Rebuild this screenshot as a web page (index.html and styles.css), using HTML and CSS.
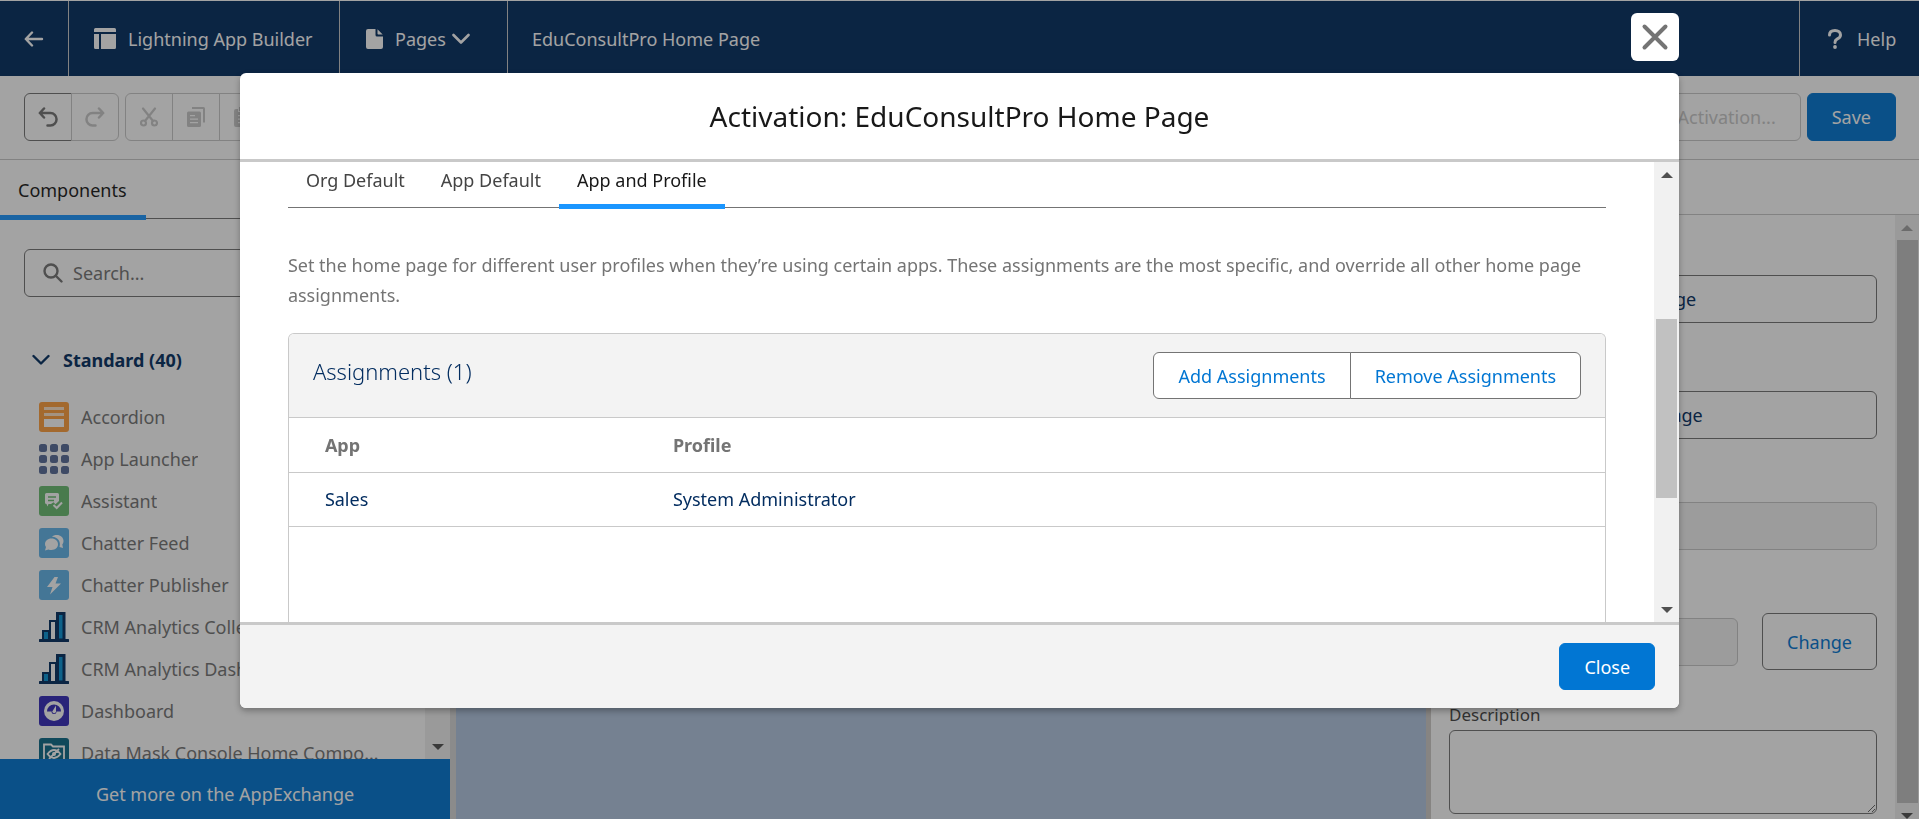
FILE: index.html
```html
<!DOCTYPE html>
<html lang="en">
<head>
<meta charset="utf-8">
<title>EduConsultPro Home Page - Lightning App Builder</title>
<link rel="stylesheet" href="styles.css">
</head>
<body>
<div class="app">
  <header class="topbar">
    <a class="topbar-cell topbar-back" href="#" aria-label="Back">
      <svg width="20" height="16" viewBox="0 0 20 16" fill="none" stroke="currentColor" stroke-width="2.4" stroke-linecap="round" stroke-linejoin="round"><path d="M18 8H2M8 1.5 1.8 8 8 14.5"/></svg>
    </a>
    <a class="topbar-cell topbar-builder" href="#">
      <svg width="22" height="21" viewBox="0 0 22 21" fill="currentColor"><path d="M1.5 0h19Q22 0 22 1.500V4H0V1.500Q0 0 1.500 0ZM0 6h5v15H1.500Q0 21 0 19.500ZM7 6h15v13.500q0 1.500-1.500 1.500H7Z"/></svg>
      <span>Lightning App Builder</span>
    </a>
    <button class="topbar-cell topbar-pages" type="button">
      <svg width="17" height="20" viewBox="0 0 17 20" fill="currentColor"><path d="M2 0h7.500v6Q9.500 7.500 11 7.500h6V18q0 2-2 2H2q-2 0-2-2V2Q0 0 2 0ZM11.500.3 16.700 5.500H12.200q-.7 0-.7-.7Z"/></svg>
      <span>Pages</span>
      <svg class="chevron" width="18" height="12" viewBox="0 0 18 12" fill="none" stroke="currentColor" stroke-width="2.600" stroke-linecap="round" stroke-linejoin="round"><path d="M1.500 2 9 9.500 16.500 2"/></svg>
    </button>
    <span class="topbar-title">EduConsultPro Home Page</span>
    <a class="topbar-help" href="#">
      <svg width="14" height="20" viewBox="0 0 14 20"><path d="M1.500 6C1.500 3 3.700 1.500 7 1.500S12.500 3.300 12.500 6 10.800 9.200 8.700 10.300Q7 11.200 7 13.500" fill="none" stroke="currentColor" stroke-width="3" stroke-linecap="round"/><circle cx="7" cy="18" r="1.900" fill="currentColor"/></svg>
      <span>Help</span>
    </a>
  </header>

  <div class="toolbar">
    <div class="icon-group">
      <button type="button" class="icon-button is-enabled" aria-label="Undo">
        <svg width="20" height="20" viewBox="0 0 20 20" fill="none" stroke="currentColor" stroke-width="2.500" stroke-linecap="round" stroke-linejoin="round"><path d="M6 1.500 1.800 6 6 10.500M2 6h10.500a6 6.200 0 0 1 0 12.500H9.500"/></svg>
      </button>
      <button type="button" class="icon-button" aria-label="Redo" disabled>
        <svg width="20" height="20" viewBox="0 0 20 20" fill="none" stroke="currentColor" stroke-width="2.500" stroke-linecap="round" stroke-linejoin="round"><path d="M14 1.500 18.200 6 14 10.500M18 6H7.500a6 6.200 0 0 0 0 12.500H10.500"/></svg>
      </button>
    </div>
    <div class="icon-group">
      <button type="button" class="icon-button" aria-label="Cut" disabled>
        <svg width="18" height="20" viewBox="0 0 18 20" fill="none" stroke="currentColor" stroke-width="2.200" stroke-linecap="round"><path d="M3 1.500 13 14M15 1.500 5 14"/><circle cx="3.500" cy="16" r="2.500"/><circle cx="14.500" cy="16" r="2.500"/></svg>
      </button>
      <button type="button" class="icon-button" aria-label="Copy" disabled>
        <svg width="18" height="20" viewBox="0 0 18 20" fill="currentColor"><path d="M5 0h11.500Q18 0 18 1.500V15.500H16V2H5Z"/><path fill-rule="evenodd" d="M1.500 4.500h11Q14 4.500 14 6v12.500q0 1.500-1.500 1.500h-11Q0 20 0 18.500V6Q0 4.500 1.500 4.500ZM3 8v1.300h5V8ZM3 11.500v1.300h8v-1.300ZM3 15v1.300h8V15Z"/></svg>
      </button>
      <button type="button" class="icon-button" aria-label="Paste" disabled>
        <svg width="18" height="20" viewBox="0 0 18 20" fill="currentColor"><path d="M5 0h8v4H5Z"/><path fill-rule="evenodd" d="M2 2h2v3h10V2h2q2 0 2 2v14q0 2-2 2H2q-2 0-2-2V4q0-2 2-2ZM4 8v1.300h10V8ZM4 11.500v1.300h10v-1.300ZM4 15v1.300h10V15Z"/></svg>
      </button>
    </div>
    <div class="toolbar-actions">
      <button type="button" class="button button-outline" disabled>Activation...</button>
      <button type="button" class="button button-brand">Save</button>
    </div>
  </div>

  <div class="workspace">
    <aside class="components">
      <div class="panel-tabs"><button type="button" class="panel-tab">Components</button></div>
      <div class="components-scroll">
        <div class="components-list">
          <label class="search">
            <svg width="20" height="20" viewBox="0 0 20 20" fill="none" stroke="currentColor" stroke-width="2.400" stroke-linecap="round"><circle cx="8" cy="8" r="6.500"/><path d="m13 13 5.500 5.500"/></svg>
            <input type="text" placeholder="Search..." aria-label="Search components">
          </label>
          <button type="button" class="section-toggle">
            <svg width="18" height="12" viewBox="0 0 18 12" fill="none" stroke="currentColor" stroke-width="2.400" stroke-linecap="round" stroke-linejoin="round"><path d="M1.500 2 9 9.500 16.500 2"/></svg>
            <span>Standard (40)</span>
          </button>
          <ul class="items">
            <li><svg class="tile" viewBox="0 0 30 30"><rect width="30" height="30" rx="3" fill="#ff9e3d"/><path d="M5 5h20v3H5ZM5 11h20v3H5Z" fill="#fff" opacity=".72"/><path d="M5 17h20v8H5Z" fill="#fff"/></svg><span>Accordion</span></li>
            <li><svg class="tile" viewBox="0 0 30 30" fill="#576b98"><rect width="8" height="8" rx="2.500"/><rect x="11" width="8" height="8" rx="2.500"/><rect x="22" width="8" height="8" rx="2.500"/><rect y="11" width="8" height="8" rx="2.500"/><rect x="11" y="11" width="8" height="8" rx="2.500"/><rect x="22" y="11" width="8" height="8" rx="2.500"/><rect y="22" width="8" height="8" rx="2.500"/><rect x="11" y="22" width="8" height="8" rx="2.500"/><rect x="22" y="22" width="8" height="8" rx="2.500"/></svg><span>App Launcher</span></li>
            <li><svg class="tile" viewBox="0 0 30 30"><rect width="30" height="30" rx="3" fill="#69bd70"/><path d="M7.500 7h11Q20 7 20 8.500V15l-3.500 3.200-2-2L12 18H9.500L8.500 20.500 7.500 18Q6 18 6 16.500v-8Q6 7 7.500 7Z" fill="#fff"/><path d="M9 11h8M9 14.500h6" stroke="#69bd70" stroke-width="1.300"/><path d="m14.500 19 3.200 3L23 16.500" fill="none" stroke="#fff" stroke-width="2"/></svg><span>Assistant</span></li>
            <li><svg class="tile" viewBox="0 0 30 30"><rect width="30" height="30" rx="3" fill="#62b4ea"/><path d="M12.500 10.500c4 0 6.500 2.500 6.500 5.800s-2.500 5.700-6.500 5.700q-1.700 0-3-.6L6 22.500l1-3.500q-1-1.200-1-2.800c0-3.200 2.500-5.700 6.500-5.700Z" fill="#fff"/><path d="M13 8.700c1-1 2.700-1.700 4.700-1.700 4 0 6.800 2.600 6.800 6 0 1.400-.5 2.500-1.200 3.500l.7 3.500-3.500-1c1.600-5.500-1.500-10-7.500-10.300Z" fill="#fff"/></svg><span>Chatter Feed</span></li>
            <li><svg class="tile" viewBox="0 0 30 30"><rect width="30" height="30" rx="3" fill="#62b4ea"/><path d="M15.500 7 8 17h5.500L11 24.500 22 13.500h-5.500L19 7Z" fill="#fff"/></svg><span>Chatter Publisher</span></li>
            <li><svg class="tile" viewBox="0 0 30 30"><path d="M1 28.500h28" stroke="#032d60" stroke-width="3" stroke-linecap="round"/><path d="M4 19h6v9H4Z" fill="#0793d5" stroke="#032d60" stroke-width="2"/><path d="M11 9h6v19h-6Z" fill="#fff" stroke="#032d60" stroke-width="2"/><path d="M18.500 1.500h6.500V28h-6.500Z" fill="#0793d5" stroke="#032d60" stroke-width="3"/></svg><span>CRM Analytics Collection</span></li>
            <li><svg class="tile" viewBox="0 0 30 30"><path d="M1 28.500h28" stroke="#032d60" stroke-width="3" stroke-linecap="round"/><path d="M4 19h6v9H4Z" fill="#0793d5" stroke="#032d60" stroke-width="2"/><path d="M11 9h6v19h-6Z" fill="#fff" stroke="#032d60" stroke-width="2"/><path d="M18.500 1.500h6.500V28h-6.500Z" fill="#0793d5" stroke="#032d60" stroke-width="3"/></svg><span>CRM Analytics Dashboard</span></li>
            <li><svg class="tile" viewBox="0 0 30 30"><rect width="30" height="30" rx="3" fill="#352bb9"/><circle cx="15" cy="15" r="10" fill="#fff"/><path d="M8 15.500a7 7 0 1 1 14 0h-4.500a2.500 2.500 0 0 1-5 0Z" fill="#352bb9"/><path d="M13.300 15.500 17 9.500v6.200a1.900 1.900 0 0 1-3.700 0Z" fill="#fff"/></svg><span>Dashboard</span></li>
            <li><svg class="tile" viewBox="0 0 30 30"><rect width="30" height="30" rx="3" fill="#0b6a87"/><path d="M5 24V6.500h7l2 2h11V24Z" fill="none" stroke="#fff" stroke-width="1.800"/><path d="M8.500 16q6.500-8 13 0-6.500 8-13 0ZM10 21 20 11" fill="none" stroke="#fff" stroke-width="1.800"/><circle cx="15" cy="16" r="2" fill="#fff"/></svg><span>Data Mask Console Home Component</span></li>
          </ul>
        </div>
        <div class="scrollbar" aria-hidden="true">
          <span class="arrow arrow-up"></span>
          <span class="thumb thumb-list"></span>
          <span class="arrow arrow-down"></span>
        </div>
      </div>
      <a class="appexchange" href="#">Get more on the AppExchange</a>
    </aside>
    <main class="canvas"></main>
    <aside class="properties">
      <div class="properties-head"></div>
      <div class="properties-scroll">
        <form class="fields">
          <input class="field" type="text" value="EduConsultPro Home Page" aria-label="Label">
          <input class="field" type="text" value="EduConsultPro_Home_Page" aria-label="Developer Name">
          <input class="field" type="text" aria-label="Page Type" disabled>
          <div class="field-row">
            <input class="field" type="text" aria-label="Template" disabled>
            <button type="button" class="button button-change">Change</button>
          </div>
          <div class="field-stack">
            <label for="description">Description</label>
            <textarea id="description"></textarea>
          </div>
        </form>
        <div class="scrollbar" aria-hidden="true">
          <span class="arrow arrow-up is-dim"></span>
          <span class="thumb thumb-properties"></span>
          <span class="arrow arrow-down"></span>
        </div>
      </div>
    </aside>
  </div>
</div>

<div class="backdrop">
  <section class="modal" role="dialog" aria-modal="true" aria-labelledby="modal-title">
    <button type="button" class="modal-x" aria-label="Close dialog">
      <svg width="28" height="28" viewBox="0 0 28 28" fill="none" stroke="currentColor" stroke-width="4" stroke-linecap="round"><path d="m3.500 3.500 21 21M24.500 3.500l-21 21"/></svg>
    </button>
    <header class="modal-header"><h1 id="modal-title">Activation: EduConsultPro Home Page</h1></header>
    <div class="modal-body">
      <div class="modal-content">
        <div class="tabs" role="tablist">
          <button type="button" class="tab" role="tab" aria-selected="false">Org Default</button>
          <button type="button" class="tab" role="tab" aria-selected="false">App Default</button>
          <button type="button" class="tab is-active" role="tab" aria-selected="true">App and Profile</button>
        </div>
        <p class="intro">Set the home page for different user profiles when they’re using certain apps. These assignments are the most specific, and override all other home page assignments.</p>
        <div class="card">
          <div class="card-header">
            <h2>Assignments (1)</h2>
            <div class="button-group">
              <button type="button" class="button">Add Assignments</button>
              <button type="button" class="button">Remove Assignments</button>
            </div>
          </div>
          <table class="assignments">
            <thead><tr><th scope="col">App</th><th scope="col">Profile</th></tr></thead>
            <tbody><tr><td>Sales</td><td>System Administrator</td></tr></tbody>
          </table>
        </div>
      </div>
      <div class="scrollbar" aria-hidden="true">
        <span class="arrow arrow-up"></span>
        <span class="gap-above"></span>
        <span class="thumb thumb-modal"></span>
        <span class="gap-below"></span>
        <span class="arrow arrow-down"></span>
      </div>
    </div>
    <footer class="modal-footer"><button type="button" class="button button-brand">Close</button></footer>
  </section>
</div>
</body>
</html>
```

FILE: styles.css
```css
* { box-sizing: border-box; }

body {
  margin: 0;
  font-family: "Segoe UI", "Noto Sans", "Open Sans", sans-serif;
  font-size: 18px;
  line-height: 30px;
  color: #181818;
  overflow: hidden;
}

button, input, textarea { font: inherit; color: inherit; }
button { cursor: pointer; }
a { color: inherit; text-decoration: none; }
svg { flex: none; display: block; }

.app {
  height: 100vh;
  display: flex;
  flex-direction: column;
  background: #fff;
  border-top: 1px solid #fff;
}

/* Top navigation */
.topbar {
  flex: none;
  display: flex;
  height: 75px;
  background: #032d60;
  color: #fff;
}
.topbar-cell {
  display: flex;
  align-items: center;
  border: 0;
  border-right: 1px solid #c9c9c9;
  background: none;
  color: inherit;
}
.topbar-back { padding: 0 24px; width: 69px; }
.topbar-builder { gap: 12px; width: 271px; padding-left: 25px; }
.topbar-pages { gap: 12px; width: 168px; padding: 0 0 0 26px; }
.topbar-pages .chevron { margin-left: -6px; }
.topbar-title { flex: 1; padding-left: 24px; align-self: center; }
.topbar-help {
  display: flex;
  align-items: center;
  gap: 15px;
  width: 120px;
  padding-left: 28px;
  border-left: 1px solid #c9c9c9;
}

/* Toolbar */
.toolbar {
  flex: none;
  display: flex;
  gap: 6px;
  height: 84px;
  padding: 17px 23px 0 24px;
  border-bottom: 1px solid #c9c9c9;
}
.icon-group { display: flex; }
.icon-button {
  display: grid;
  place-items: center;
  width: 48px;
  height: 48px;
  padding: 0;
  border: 1px solid #c9c9c9;
  background: #fff;
  color: #c9c9c9;
}
.icon-button + .icon-button { margin-left: -1px; }
.icon-button:first-child { border-radius: 6px 0 0 6px; }
.icon-button:last-child { border-radius: 0 6px 6px 0; }
.icon-button.is-enabled { border-color: #747474; color: #747474; }
.toolbar-actions { display: flex; gap: 6px; margin-left: auto; }

.button {
  height: 48px;
  padding: 0 24px;
  border: 1px solid #747474;
  border-radius: 6px;
  background: #fff;
  color: #0176d3;
  white-space: nowrap;
}
.button-outline { border-color: #c9c9c9; color: #c9c9c9; }
.button-brand { border-color: #0176d3; background: #0176d3; color: #fff; }

/* Workspace columns */
.workspace { flex: 1; min-height: 0; display: flex; }

.components {
  flex: none;
  display: flex;
  flex-direction: column;
  width: 450px;
}
.panel-tabs {
  flex: none;
  display: flex;
  height: 59px;
  border-bottom: 1px solid #747474;
}
.panel-tab {
  width: 146px;
  height: 60px;
  padding: 4px 0 0 18px;
  border: 0;
  border-bottom: 5px solid #1b96ff;
  background: none;
  text-align: left;
}
.components-scroll { flex: 1; min-height: 0; display: flex; }
.components-list {
  flex: 1;
  min-width: 0;
  overflow: hidden;
  padding: 30px 24px 0;
}
.search {
  display: flex;
  align-items: center;
  gap: 10px;
  height: 48px;
  padding: 0 18px;
  border: 1px solid #747474;
  border-radius: 6px;
  color: #747474;
}
.search input { flex: 1; min-width: 0; padding: 0; border: 0; background: none; outline: 0; }
.search input::placeholder { color: #747474; opacity: 1; }
.section-toggle {
  display: flex;
  align-items: center;
  gap: 13px;
  margin: 48px 0 27px;
  padding: 0 0 0 8px;
  border: 0;
  background: none;
  color: #032d60;
  font-weight: 700;
}
.items {
  display: flex;
  flex-direction: column;
  gap: 12px;
  margin: 0;
  padding: 0 12px 0 15px;
  list-style: none;
  color: #747474;
}
.items li { display: flex; align-items: center; gap: 12px; height: 30px; }
.items span { min-width: 0; overflow: hidden; text-overflow: ellipsis; white-space: nowrap; }
.tile { width: 30px; height: 30px; }
.appexchange {
  flex: none;
  display: grid;
  place-items: center;
  height: 60px;
  padding-top: 10px;
  background: #0176d3;
  color: #fff;
}

.canvas {
  flex: 1;
  background: #b2c6e1;
  border-left: 6px solid #d8d8d8;
  border-right: 5px solid #cfcbc8;
}

.properties {
  flex: none;
  display: flex;
  flex-direction: column;
  width: 488px;
}
.properties-head { flex: none; height: 55px; border-bottom: 1px solid #c9c9c9; }
.properties-scroll { flex: 1; min-height: 0; display: flex; }
.fields {
  flex: 1;
  min-width: 0;
  overflow: hidden;
  display: flex;
  flex-direction: column;
  padding: 60px 18px 0;
}
.field {
  flex: none;
  width: 100%;
  height: 48px;
  padding: 0 18px;
  border: 1px solid #747474;
  border-radius: 6px;
  background: #fff;
  color: #032d60;
}
.field + .field { margin-top: 68px; }
.field:disabled { margin-top: 63px; border-color: #c9c9c9; background: #f3f3f3; }
.field-row { display: flex; align-items: center; gap: 24px; margin-top: 63px; }
.field-row .field { flex: 1; min-width: 0; margin-top: 0; }
.button-change { height: 57px; }
.field-stack { display: flex; flex-direction: column; margin-top: 30px; color: #444; }
.field-stack textarea {
  height: 84px;
  padding: 6px 18px;
  border: 1px solid #747474;
  border-radius: 6px;
  background: #fff;
  resize: vertical;
}
.field-stack label { font-size: 17px; }

/* Scrollbars */
.scrollbar {
  flex: none;
  display: flex;
  flex-direction: column;
  align-items: center;
  width: 25px;
  background: #f1f1f1;
}
.properties .scrollbar { width: 24px; margin-bottom: -9px; }
.arrow { flex: none; display: grid; place-items: center; width: 25px; height: 25px; }
.arrow::before {
  content: "";
  border: 6px solid transparent;
}
.arrow-up::before { border-top: 0; border-bottom-color: #505050; }
.arrow-down::before { border-bottom: 0; border-top-color: #505050; }
.arrow-up.is-dim::before { border-bottom-color: #a3a3a3; }
.thumb { width: 21px; background: #c1c1c1; }
.thumb-list { height: 120px; margin-bottom: auto; }
.thumb-properties { flex: 1; }
.gap-above { flex: 132; }
.thumb-modal { flex: 179; }
.gap-below { flex: 99; }

/* Activation dialog */
.backdrop {
  position: fixed;
  inset: 0;
  display: flex;
  justify-content: center;
  padding: 73px 0 111px;
  background: rgba(25, 25, 25, 0.4);
}
.modal {
  position: relative;
  display: flex;
  flex-direction: column;
  width: 75%;
  border-radius: 6px;
  background: #fff;
  box-shadow: 0 3px 6px rgba(0, 0, 0, 0.3);
}
.modal-x {
  position: absolute;
  right: 0;
  bottom: calc(100% + 12px);
  display: grid;
  place-items: center;
  width: 48px;
  height: 48px;
  padding: 0;
  border: 0;
  border-radius: 6px;
  background: #fff;
  color: #747474;
}
.modal-header {
  flex: none;
  display: grid;
  place-items: center;
  height: 89px;
  border-bottom: 3px solid #c9c9c9;
}
.modal-header h1 { margin: 0; font-size: 28px; font-weight: 400; line-height: 36px; }
.modal-body { flex: 1; min-height: 0; display: flex; }
.modal-content {
  flex: 1;
  min-width: 0;
  display: flex;
  flex-direction: column;
  overflow: hidden;
  padding: 0 48px;
}
.tabs { flex: none; display: flex; height: 46px; border-bottom: 1px solid #747474; }
.tab {
  height: 47px;
  padding: 0 18px 6px;
  border: 0;
  border-bottom: 5px solid transparent;
  background: none;
  color: #444;
}
.tab.is-active { border-bottom-color: #1b96ff; color: #181818; }
.intro { margin: 42px 0 23px; color: #747474; }
.card {
  flex: 1;
  border: 1px solid #c9c9c9;
  border-bottom: 0;
  border-radius: 6px 6px 0 0;
}
.card-header {
  display: flex;
  justify-content: space-between;
  height: 84px;
  padding: 18px 24px;
  border-bottom: 1px solid #c9c9c9;
  border-radius: 5px 5px 0 0;
  background: #f3f3f3;
}
.card-header h2 { margin: 4px 0 0; font-size: 22px; font-weight: 300; color: #032d60; }
.button-group { display: flex; }
.button-group .button { height: 47px; }
.button-group .button:first-child { border-radius: 6px 0 0 6px; }
.button-group .button:last-child { margin-left: -1px; border-radius: 0 6px 6px 0; }
.assignments { width: 100%; border-collapse: collapse; table-layout: fixed; }
.assignments th, .assignments td {
  height: 54px;
  padding: 0 0 0 36px;
  border-bottom: 1px solid #c9c9c9;
  text-align: left;
}
.assignments th:first-child { width: 348px; }
.assignments th { color: #747474; font-weight: 700; }
.assignments td { color: #032d60; }
.modal-footer {
  flex: none;
  display: flex;
  justify-content: flex-end;
  padding: 18px 24px;
  height: 86px;
  border-top: 3px solid #c9c9c9;
  border-radius: 0 0 6px 6px;
  background: #f3f3f3;
}
.modal-footer .button { height: 47px; }
```
